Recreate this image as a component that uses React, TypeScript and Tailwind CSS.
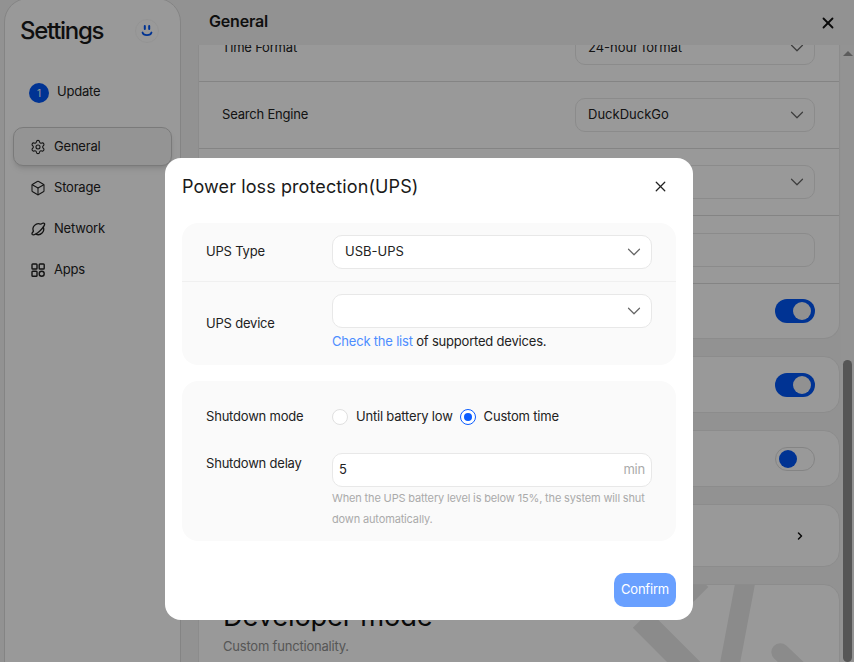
import { ChevronDown, ChevronRight, X, Settings, Box } from 'lucide-react'

const font = { fontFamily: 'Inter, "Liberation Sans", sans-serif' }

function NavItem({ icon, label, active }: { icon: React.ReactNode; label: string; active?: boolean }) {
  return (
    <div
      className={`flex h-[39px] items-center gap-[8px] rounded-[10px] pl-[16px] text-[13px] text-[#222] ${
        active ? 'border border-[#ccc] bg-[#f7f7f7] shadow-md' : 'border border-transparent'
      }`}
    >
      {icon}
      {label}
    </div>
  )
}

function SelectBox({ value, className, noArrow }: { value?: string; className?: string; noArrow?: boolean }) {
  return (
    <div className={`flex h-[34px] items-center justify-between rounded-[10px] border border-[#e8e8e8] bg-white pl-3 pr-[6px] text-[13px] text-[#222] ${className ?? ''}`}>
      <span className="tracking-[0px]">{value}</span>
      {!noArrow && <ChevronDown className="h-[22px] w-[22px] text-[#666]" strokeWidth={1.3} />}
    </div>
  )
}

function Toggle({ on }: { on: boolean }) {
  return on ? (
    <div className="flex h-6 w-10 items-center justify-end rounded-full bg-[#0055f5] pr-[4px]">
      <div className="h-[18px] w-[18px] rounded-full bg-[#f2f2f2]" />
    </div>
  ) : (
    <div className="flex h-6 w-10 items-center rounded-full border border-[#ddd] pl-[3px]">
      <div className="h-[18px] w-[18px] rounded-full bg-[#0055f5]" />
    </div>
  )
}

function SettingRow({ label, value, hideBorder, noArrow }: { label?: string; value?: string; hideBorder?: boolean; noArrow?: boolean }) {
  return (
    <div className={`flex h-[67px] items-center justify-between pl-[23px] pr-6 text-[13px] text-[#222] ${hideBorder ? '' : 'border-b border-[#ddd]'}`}>
      <span>{label}</span>
      <SelectBox value={value} noArrow={noArrow} className="w-[240px] border-[#ddd] bg-transparent" />
    </div>
  )
}

function ToggleCard({ on, className }: { on: boolean; className: string }) {
  return (
    <div className={`flex items-center justify-end rounded-b-2xl border border-[#eaeaea] bg-white pr-6 ${className}`}>
      <Toggle on={on} />
    </div>
  )
}

export default function App() {
  return (
    <div className="relative flex h-[662px] w-[854px] overflow-hidden bg-[#f3f3f3] tracking-[-0.2px]" style={font}>
      {/* Sidebar */}
      <aside className="z-10 mb-[-30px] ml-1 mt-[-2px] h-[700px] w-[177px] shrink-0 rounded-[24px] border border-[#ddd] bg-white px-2">
        <div className="flex items-center justify-between pl-[7px] pr-[13px] pt-[16px]">
          <h1 className="text-[24px] font-medium leading-[32px] tracking-[-1.3px] text-[#1a1a1a]">Settings</h1>
          <div className="flex h-6 w-6 items-center justify-center rounded-full border border-[#f6f6f6]">
            <svg viewBox="0 0 12 12" className="h-[12px] w-[12px]" fill="none">
              <path d="M3.8 1v3M8.2 1v3" stroke="#0055f5" strokeWidth="2" strokeLinecap="round" />
              <path d="M1.5 7.5c1 3.4 8 3.4 9 0" stroke="#0055f5" strokeWidth="1.8" strokeLinecap="round" />
            </svg>
          </div>
        </div>
        <div className="mt-[36px] flex items-center gap-2 pl-4 text-[13px] text-[#222]">
          <span className="flex h-5 w-5 items-center justify-center rounded-full bg-[#0055f5] text-[10px] text-white">1</span>
          <span className="mt-[-2px]">Update</span>
        </div>
        <div className="mt-[24px] flex flex-col gap-[2px]">
          <NavItem active label="General" icon={<Settings className="h-[16px] w-[16px]" strokeWidth={1.6} />} />
          <NavItem label="Storage" icon={<Box className="h-[16px] w-[16px]" strokeWidth={1.6} />} />
          <NavItem
            label="Network"
            icon={
              <svg viewBox="0 0 16 16" className="h-[16px] w-[16px]" fill="none" stroke="currentColor" strokeWidth="1.3">
                <path d="M3.6 10.6a5.4 5.4 0 0 1 7.2-7.3" />
                <path d="M13 5.6a5.4 5.4 0 0 1-7.4 7.3" />
                <path d="M10.8 3.3c1.8-1.2 3.2-1.4 3.6-.8.8 1.1-1.6 4.7-4.6 7.4-3.3 2.9-6.6 4.5-7.6 3.5-.5-.6-.1-1.8 1.4-3.2" />
              </svg>
            }
          />
          <NavItem
            label="Apps"
            icon={
              <svg viewBox="0 0 16 16" className="h-[16px] w-[16px]" fill="none" stroke="currentColor" strokeWidth="1.4">
                <rect x="2" y="2" width="5" height="5" rx="0.8" />
                <rect x="9.2" y="2" width="5" height="5" rx="0.8" />
                <rect x="2" y="9.2" width="5" height="5" rx="0.8" />
                <circle cx="11.7" cy="11.7" r="2.5" />
              </svg>
            }
          />
        </div>
      </aside>

      {/* Main column */}
      <main className="relative flex min-w-0 flex-1 flex-col overflow-hidden">
        <header className="z-10 flex h-[45px] shrink-0 items-center justify-between bg-[#f3f3f3] pl-7 pr-[17px]">
          <span className="mt-[-3px] text-[16px] font-semibold text-[#1a1a1a]">General</span>
          <X className="h-[18px] w-[18px] text-[#111]" strokeWidth={2.4} />
        </header>
        <div className="flex min-h-0 flex-1">
          <div className="ml-[17px] mt-[-30px] w-[642px] shrink-0">
            <div className="border-x border-[#eaeaea] bg-white">
              <SettingRow label="Time Format" value="24-hour format" />
              <SettingRow label="Search Engine" value="DuckDuckGo" />
              <SettingRow />
              <SettingRow noArrow hideBorder />
            </div>
            <ToggleCard on className="h-[56px] border-t-[#ddd]" />
            <ToggleCard on className="mt-[17px] h-[57px] rounded-t-2xl" />
            <ToggleCard on={false} className="mt-[17px] h-[57px] rounded-t-2xl" />
            <div className="mt-[17px] flex h-[63px] items-center justify-end rounded-2xl border border-[#eaeaea] bg-white pr-[33px]">
              <ChevronRight className="h-3 w-3 text-[#111]" strokeWidth={3} />
            </div>
            <div className="relative mt-[17px] h-[140px] overflow-hidden rounded-2xl border border-[#eaeaea] bg-white pl-6">
              <svg viewBox="0 0 640 140" className="absolute inset-0 h-full w-full" fill="none">
                <path d="M550 -5 L533 85" stroke="#e8e8e8" strokeWidth="20" />
                <path d="M444 35 L500 91" stroke="#e8e8e8" strokeWidth="24" />
                <path d="M505 -5 L490 10" stroke="#e8e8e8" strokeWidth="20" />
                <path d="M585 68 L640 120" stroke="#e8e8e8" strokeWidth="18" strokeLinecap="round" />
              </svg>
              <div className="relative pt-[14px] text-[27.3px] leading-[36px] text-[#111]">Developer mode</div>
              <div className="relative mt-[2px] text-[13px] text-[#909090]">Custom functionality.</div>
            </div>
          </div>
          {/* Scrollbar */}
          <div className="relative ml-px flex w-[13px] shrink-0 flex-col items-center bg-[#f5f5f5]">
            <div className="mt-[6px] h-0 w-0 border-x-[5px] border-b-[5px] border-x-transparent border-b-[#999]" />
            <div className="mt-[304px] h-[400px] w-[9px] rounded-full bg-[#8f8f8f]" />
          </div>
        </div>
      </main>

      {/* Overlay */}
      <div className="absolute inset-0 z-20 bg-black/40" />

      {/* Dialog */}
      <div className="absolute left-[165px] top-[158px] z-30 h-[462px] w-[528px] rounded-2xl bg-white px-[17px]">
        <div className="flex h-[65px] items-center justify-between pb-[8px]">
          <h2 className="text-[18px] tracking-[0.1px] text-[#1a1a1a]">Power loss protection(UPS)</h2>
          <X className="mr-[7px] h-[17px] w-[17px] text-[#222]" strokeWidth={1.8} />
        </div>

        <section className="h-[142px] rounded-2xl bg-[#fafafa] text-[13px] text-[#222]">
          <div className="flex h-[59px] items-center border-b border-[#f0f0f0] pl-6">
            <span className="w-[126px] shrink-0">UPS Type</span>
            <SelectBox value="USB-UPS" className="w-[320px]" />
          </div>
          <div className="flex pl-6 pt-3">
            <span className="mt-[20px] w-[126px] shrink-0">UPS device</span>
            <div className="w-[320px]">
              <SelectBox />
              <p className="mt-[5px] leading-[16px]">
                <span className="text-[#4d8dff]">Check the list</span> of supported devices.
              </p>
            </div>
          </div>
        </section>

        <section className="mt-4 h-[160px] rounded-2xl bg-[#fafafa] pl-6 pt-[28px] text-[13px] text-[#222]">
          <div className="flex h-4 items-center">
            <span className="w-[126px] shrink-0">Shutdown mode</span>
            <span className="h-4 w-4 rounded-full border border-[#e0e0e0] bg-white" />
            <span className="ml-2">Until battery low</span>
            <span className="ml-[7px] flex h-4 w-4 items-center justify-center rounded-full border border-[#0a5cff] bg-white">
              <span className="h-2 w-2 rounded-full bg-[#0a5cff]" />
            </span>
            <span className="ml-2">Custom time</span>
          </div>
          <div className="mt-[28px] flex">
            <span className="w-[126px] shrink-0 pt-[1px]">Shutdown delay</span>
            <div className="w-[320px]">
              <div className="flex h-[34px] items-center justify-between rounded-[10px] border border-[#e8e8e8] bg-white px-[6px] text-[#222]">
                <span>5</span>
                <span className="text-[#aaa]">min</span>
              </div>
              <p className="mt-[1px] text-[11px] leading-[21px] tracking-[-0.15px] text-[#aaa]">
                When the UPS battery level is below 15%, the system will shut down automatically.
              </p>
            </div>
          </div>
        </section>

        <div className="mt-8 flex justify-end">
          <button className="h-[34px] w-[62px] rounded-[10px] bg-[#69a0ff] text-[13px] text-white">Confirm</button>
        </div>
      </div>
    </div>
  )
}
